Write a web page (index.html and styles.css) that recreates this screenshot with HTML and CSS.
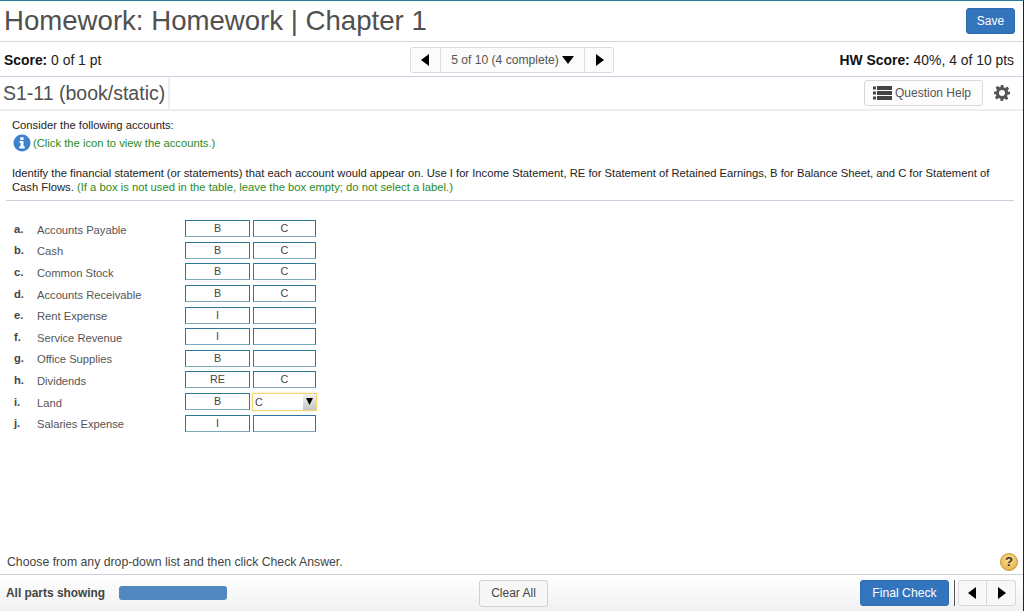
FILE: index.html
```html
<!doctype html>
<html lang="en">
  <head>
    <meta charset="UTF-8" />
    <meta name="viewport" content="width=device-width, initial-scale=1.0" />
    <title>Homework: Homework | Chapter 1</title>
    <link rel="stylesheet" href="styles.css">
  </head>
  <body>
    <div class="page">
      <header class="title-bar">
        <h1>Homework: Homework | Chapter 1</h1>
        <button class="btn-primary btn-save">Save</button>
      </header>

      <div class="score-bar">
        <div class="score"><b>Score:</b> 0 of 1 pt</div>
        <div class="pager">
          <button class="pager-arrow"><svg width="9" height="12" viewBox="0 0 9 12"><path d="M8 0v12L0 6z"/></svg></button>
          <button class="pager-label">5 of 10 (4 complete)<svg width="12" height="8" viewBox="0 0 12 8"><path d="M0 0h12L6 8z"/></svg></button>
          <button class="pager-arrow"><svg width="9" height="12" viewBox="0 0 9 12"><path d="M1 0v12l8-6z"/></svg></button>
        </div>
        <div class="score score-right"><b>HW Score:</b> 40%, 4 of 10 pts</div>
      </div>

      <div class="question-bar">
        <h2>S1-11 (book/static)</h2>
        <div class="question-tools">
          <button class="btn-help">
            <svg width="19" height="14" viewBox="0 0 19 14"><path d="M0 .5h3v3H0zM0 5.500h3v3H0zM0 10.500h3v3H0zM4 0h15v4H4zM4 5h15v4H4zM4 10h15v4H4z" fill="#444"/></svg>
            Question Help
          </button>
          <svg class="gear" width="16" height="16" viewBox="0 0 24 24"><path fill="#555" fill-rule="evenodd" d="M10 0h4l.7 3.600 2.100.9 3-2.100 2.800 2.800-2.100 3 .9 2.100L24 10v4l-3.600.7-.9 2.100 2.100 3-2.800 2.800-3-2.100-2.100.9L14 24h-4l-.7-3.600-2.100-.9-3 2.100-2.800-2.800 2.100-3-.9-2.100L0 14v-4l3.600-.7.9-2.100-2.100-3 2.800-2.800 3 2.100 2.100-.9zM12 7.500a4.500 4.500 0 1 0 0 9 4.500 4.500 0 0 0 0-9z"/></svg>
        </div>
      </div>

      <main class="content">
        <p class="intro">Consider the following accounts:</p>
        <p class="intro-link">
          <svg width="18" height="18" viewBox="0 0 18 18"><circle cx="9" cy="9" r="8.500" fill="#3f7fd0"/><path d="M7.300 3.300h3.200v2.600H7.300zM6.500 7h4v5.300h1.200v2.200H6.300v-2.200h1.300V9H6.500z" fill="#fff"/></svg>
          <span class="green">(Click the icon to view the accounts.)</span>
        </p>
        <p class="instructions">Identify the financial statement (or statements) that each account would appear on. Use I for Income Statement, RE for Statement of Retained Earnings, B for Balance Sheet, and C for Statement of Cash Flows. <span class="green">(If a box is not used in the table, leave the box empty; do not select a label.)</span></p>

        <div class="accounts">
          <div class="account"><b>a.</b><span>Accounts Payable</span><div class="box">B</div><div class="box">C</div></div>
          <div class="account"><b>b.</b><span>Cash</span><div class="box">B</div><div class="box">C</div></div>
          <div class="account"><b>c.</b><span>Common Stock</span><div class="box">B</div><div class="box">C</div></div>
          <div class="account"><b>d.</b><span>Accounts Receivable</span><div class="box">B</div><div class="box">C</div></div>
          <div class="account"><b>e.</b><span>Rent Expense</span><div class="box">I</div><div class="box"></div></div>
          <div class="account"><b>f.</b><span>Service Revenue</span><div class="box">I</div><div class="box"></div></div>
          <div class="account"><b>g.</b><span>Office Supplies</span><div class="box">B</div><div class="box"></div></div>
          <div class="account"><b>h.</b><span>Dividends</span><div class="box">RE</div><div class="box">C</div></div>
          <div class="account"><b>i.</b><span>Land</span><div class="box">B</div>
            <div class="box box-open">C<i class="drop-arrow"><svg width="7" height="7" viewBox="0 0 7 7"><path d="M0 0h7L3.500 7z"/></svg></i></div>
          </div>
          <div class="account"><b>j.</b><span>Salaries Expense</span><div class="box">I</div><div class="box"></div></div>
        </div>
      </main>

      <div class="hint">
        <span>Choose from any drop-down list and then click Check Answer.</span>
        <div class="help-dot">?</div>
      </div>

      <footer class="footer">
        <b class="parts-label">All parts showing</b>
        <div class="parts-bar"></div>
        <button class="btn-clear">Clear All</button>
        <div class="footer-right">
          <button class="btn-primary btn-final">Final Check</button>
          <div class="pager pager-small">
            <button class="pager-arrow"><svg width="9" height="12" viewBox="0 0 9 12"><path d="M8 0v12L0 6z"/></svg></button>
            <button class="pager-arrow"><svg width="9" height="12" viewBox="0 0 9 12"><path d="M1 0v12l8-6z"/></svg></button>
          </div>
        </div>
      </footer>
    </div>
  </body>
</html>
```

FILE: styles.css
```css
html, body {
  margin: 0;
  height: 100%;
}
body {
  font-family: 'Liberation Sans', Arial, sans-serif;
  color: #333;
  background-color: white;
  overflow: hidden;
}
button {
  font-family: inherit;
  cursor: pointer;
}
p {
  margin: 0;
}
.page {
  display: flex;
  flex-direction: column;
  height: 611px;
  box-sizing: border-box;
  border-top: 1px solid #2a7a9c;
  border-right: 1px solid #222;
}
.green {
  color: #2b8a1c;
}
.title-bar {
  display: flex;
  align-items: center;
  justify-content: space-between;
  height: 41px;
  box-sizing: border-box;
  padding: 0 8px 0 4px;
  border-bottom: 1px solid #d4d6dc;
}
h1 {
  margin: 0;
  font-size: 27.600px;
  font-weight: normal;
  color: #505050;
  white-space: nowrap;
}
.btn-primary {
  background-color: #3375bd;
  color: white;
  border: 1px solid #2e6cae;
  border-radius: 3px;
}
.btn-save {
  width: 49px;
  height: 26px;
  font-size: 12px;
  padding: 0;
}
.score-bar {
  display: grid;
  grid-template-columns: 406px auto 1fr;
  align-items: center;
  height: 35px;
  box-sizing: border-box;
  padding: 1px 9px 0 4px;
  border-bottom: 1px solid #ccd0de;
}
.score {
  font-size: 13.900px;
  color: #222;
}
.score-right {
  text-align: right;
}
.score b {
  color: #111;
}
.pager {
  display: flex;
  height: 26px;
  box-sizing: border-box;
  border: 1px solid #dcdcdc;
  border-radius: 3px;
  background-color: #fbfbfb;
}
.pager button {
  border: none;
  background: none;
  padding: 0;
  display: flex;
  align-items: center;
  justify-content: center;
}
.pager-arrow {
  width: 29px;
}
.pager button + button {
  border-left: 1px solid #dcdcdc;
}
.pager-label {
  width: 144px;
  gap: 3px;
  font-size: 12.100px;
  color: #555;
}
.question-bar {
  display: flex;
  align-items: stretch;
  justify-content: space-between;
  height: 34px;
  box-sizing: border-box;
  border-bottom: 2px solid #eeeeee;
}
h2 {
  margin: 0;
  padding: 0 3px;
  font-size: 19.500px;
  font-weight: normal;
  line-height: 32px;
  color: #505050;
  border-right: 2px solid #eeeeee;
}
.question-tools {
  display: flex;
  align-items: center;
  gap: 11px;
  padding: 0 13px 1px 0;
}
.btn-help {
  display: flex;
  align-items: center;
  gap: 3px;
  width: 119px;
  height: 26px;
  padding: 0 0 0 8px;
  font-size: 12px;
  color: #555;
  background-color: #fcfcfc;
  border: 1px solid #d8d8d8;
  border-radius: 3px;
}
.content {
  flex: 1;
  padding: 7px 9px 0 12px;
  font-size: 11.240px;
  color: #222;
}
.intro {
  line-height: 14px;
}
.intro-link {
  display: flex;
  align-items: center;
  gap: 2px;
  height: 18px;
  margin: 2px 0 0 1px;
  line-height: 14px;
}
.instructions {
  margin-top: 14px;
  margin-left: -6px;
  padding: 0 20px 6px 6px;
  line-height: 14px;
  border-bottom: 1px solid #ccd0de;
}
.accounts {
  margin-top: 17px;
}
.account {
  display: flex;
  align-items: center;
  gap: 3px;
  height: 21.600px;
  font-size: 11.200px;
  color: #555;
}
.account b {
  width: 23px;
  margin-right: -1px;
  padding-left: 2px;
  box-sizing: border-box;
  flex: none;
  color: #444;
}
.account span {
  width: 145px;
  padding-top: 2px;
}
.box {
  width: 65px;
  height: 17px;
  box-sizing: border-box;
  text-align: center;
  font-size: 10.800px;
  line-height: 14px;
  color: #444;
  border: 1px solid #2e7596;
  border-bottom-color: #7fa9bd;
}
.box + .box {
  width: 63px;
}
.box + .box-open {
  display: flex;
  align-items: center;
  justify-content: space-between;
  width: 65px;
  height: 18px;
  margin-left: -1px;
  padding-left: 2px;
  text-align: left;
  border: 1px solid #f2d877;
  box-shadow: 0 0 2px #f5e08f;
}
.drop-arrow {
  display: flex;
  align-items: center;
  justify-content: center;
  width: 13px;
  height: 16px;
  background: linear-gradient(#f2f2f2, #c4c4c4);
}
.hint {
  display: flex;
  align-items: center;
  justify-content: space-between;
  height: 29px;
  box-sizing: border-box;
  padding: 4px 5px 0 7px;
  font-size: 12.250px;
  color: #444;
}
.help-dot {
  width: 18px;
  height: 18px;
  border-radius: 50%;
  background: radial-gradient(circle at 50% 35%, #fbe08f, #e2a93b);
  border: 1px solid #c8963a;
  box-sizing: border-box;
  text-align: center;
  font-size: 13px;
  font-weight: bold;
  line-height: 16px;
  color: #333;
}
.footer {
  display: flex;
  align-items: center;
  height: 37px;
  box-sizing: border-box;
  padding: 0 7px 0 6px;
  border-top: 1px solid #d0d0d8;
  background: linear-gradient(#ffffff, #f1f1f1);
}
.parts-label {
  width: 113px;
  font-size: 11.900px;
  color: #444;
}
.parts-bar {
  width: 108px;
  height: 14px;
  border-radius: 3px;
  background-color: #5288c2;
}
.btn-clear {
  width: 69px;
  height: 27px;
  margin-left: 252px;
  padding: 0;
  font-size: 12px;
  color: #444;
  background-color: #f7f7f7;
  border: 1px solid #cfcfcf;
  border-radius: 3px;
}
.footer-right {
  display: flex;
  align-items: center;
  margin-left: auto;
}
.btn-final {
  width: 89px;
  height: 26px;
  padding: 0;
  font-size: 12.200px;
}
.pager-small {
  margin-left: 5px;
  padding-left: 3px;
  border: none;
  border-left: 1px solid #555;
  border-radius: 0;
  background: none;
}
.pager-small .pager-arrow {
  width: 29px;
  background-color: #f8f8f8;
  border: 1px solid #d8d8d8;
}
.pager-small .pager-arrow:first-child {
  border-radius: 3px 0 0 3px;
}
.pager-small .pager-arrow:last-child {
  border-left: none;
  border-radius: 0 3px 3px 0;
}
```
